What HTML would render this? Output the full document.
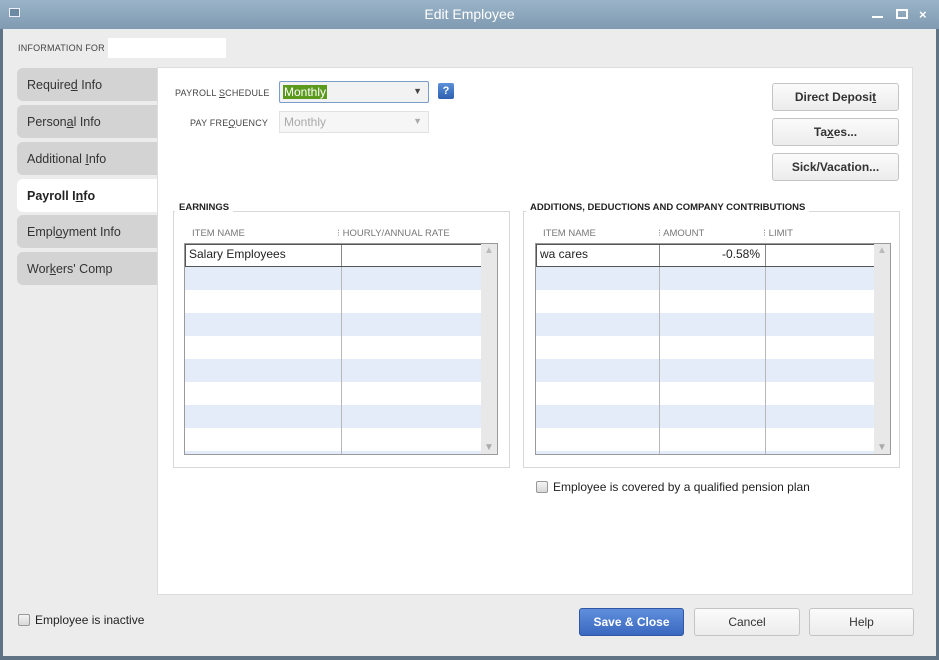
<!DOCTYPE html>
<html><head><style>
*{box-sizing:border-box;margin:0;padding:0}
body{width:939px;height:660px;overflow:hidden;background:#5f7384;font-family:"Liberation Sans",Arial,sans-serif;font-size:12px;color:#222;position:relative}
.abs{position:absolute}
#title{left:0;top:0;width:939px;height:29px;background:linear-gradient(#9ab3c8,#7f9ab1);color:#fff;font-size:14px;text-align:center;line-height:29px}
#body{left:3px;top:29px;width:933px;height:627px;background:#ececec}
.tab{position:absolute;left:17px;width:140px;height:33px;background:#d3d3d3;border-radius:6px 0 0 6px;padding:9px 0 0 10px;font-size:12.5px;color:#333}
.tab.sel{background:#fff;font-weight:bold;color:#222}
.btn{position:absolute;background:linear-gradient(#fbfbfb,#ececec);border:1px solid #c4c4c4;border-radius:3px;text-align:center;font-weight:bold;font-size:12px;color:#333;line-height:27px}
.lbl{font-size:9px;color:#444;letter-spacing:.2px}
.fs{position:absolute;border:1px solid #d8d8d8}
.leg{position:absolute;background:#fff;font-size:9.5px;font-weight:bold;padding:0 4px;color:#222}
.tbl{position:absolute;border:1px solid #9a9a9a;background:repeating-linear-gradient(#fff 0 23px,#e3ecf8 23px 46px)}
.row1{position:absolute;left:0;top:0;height:23px;border:1px solid #555;background:#fff}
.vl{position:absolute;top:0;bottom:0;width:1px;background:#b8b8b8}
.sb{position:absolute;top:0;right:0;width:16px;bottom:0;background:#e8e8e8}
.hdr{position:absolute;font-size:9.5px;color:#777}
.cb{position:absolute;width:12px;height:12px;border:1px solid #999;border-radius:2px;background:linear-gradient(#f4f4f4,#d8d8d8)}
</style></head><body>
<div id="title" class="abs">Edit Employee
<div class="abs" style="left:9px;top:8px;width:11px;height:9px;border:1px solid #eef;background:#6d8aa3"></div>
<div class="abs" style="left:872px;top:16px;width:11px;height:2px;background:#fff"></div>
<div class="abs" style="left:896px;top:9px;width:12px;height:10px;border:2px solid #fff"></div>
<div class="abs" style="left:919px;top:0;font-weight:bold;font-size:13px">×</div>
</div>
<div id="body" class="abs"></div>
<div class="abs lbl" style="left:18px;top:43px">INFORMATION FOR</div>
<div class="abs" style="left:108px;top:38px;width:118px;height:20px;background:#fff"></div>
<div class="abs" style="left:157px;top:67px;width:756px;height:528px;background:#fff;border:1px solid #ddd"></div>
<div class="tab" style="top:68px;padding-top:10px">Require<u>d</u> Info</div>
<div class="tab" style="top:105px;padding-top:10px">Person<u>a</u>l Info</div>
<div class="tab" style="top:142px;padding-top:10px">Additional <u>I</u>nfo</div>
<div class="tab sel" style="top:179px;padding-top:10px">Payroll I<u>n</u>fo</div>
<div class="tab" style="top:215px;padding-top:10px">Empl<u>o</u>yment Info</div>
<div class="tab" style="top:252px;padding-top:10px">Wor<u>k</u>ers' Comp</div>

<div class="abs lbl" style="left:175px;top:88px">PAYROLL <u>S</u>CHEDULE</div>
<div class="abs" style="left:279px;top:81px;width:150px;height:22px;border:1px solid #7a9cc8;border-radius:2px;background:#f2f2f2"><span style="position:absolute;left:3px;top:3px;background:#5c9a1e;color:#fff;font-size:12px;padding:0 1px">Monthly</span><span style="position:absolute;right:6px;top:4px;font-size:9px;color:#444">▼</span></div>
<div class="abs" style="left:438px;top:83px;width:16px;height:16px;border-radius:2px;background:linear-gradient(#5b8fd8,#2d5fb0);color:#fff;font-size:11px;font-weight:bold;text-align:center;line-height:16px">?</div>
<div class="abs lbl" style="left:190px;top:118px">PAY FRE<u>Q</u>UENCY</div>
<div class="abs" style="left:279px;top:111px;width:150px;height:22px;border:1px solid #e2e2e2;background:#f6f6f6;color:#aaa;padding:3px 4px">Monthly<span style="position:absolute;right:6px;top:4px;font-size:9px;color:#aaa">▼</span></div>

<div class="btn" style="left:772px;top:83px;width:127px;height:28px">Direct Deposi<u>t</u></div>
<div class="btn" style="left:772px;top:118px;width:127px;height:28px">Ta<u>x</u>es...</div>
<div class="btn" style="left:772px;top:153px;width:127px;height:28px">Sick/Vacation...</div>

<div class="fs" style="left:173px;top:211px;width:337px;height:257px"></div>
<div class="leg" style="left:175px;top:202px">EARNINGS</div>
<div class="hdr" style="left:192px;top:228px">ITEM NAME</div>
<div class="hdr" style="left:337px;top:228px;color:#999">⁝ <span style="color:#777">HOURLY/ANNUAL RATE</span></div>
<div class="tbl" style="left:184px;top:243px;width:314px;height:212px">
<div class="vl" style="left:156px"></div>
<div class="row1" style="width:297px"><span style="position:absolute;left:3px;top:2px;font-size:12px">Salary Employees</span><div class="vl" style="left:155px;background:#888"></div></div>
<div class="sb"><span style="position:absolute;left:3px;top:1px;color:#bbb;font-size:10px">▲</span><span style="position:absolute;left:3px;bottom:1px;color:#aaa;font-size:10px">▼</span></div>
</div>

<div class="fs" style="left:523px;top:211px;width:377px;height:257px"></div>
<div class="leg" style="left:526px;top:202px">ADDITIONS, DEDUCTIONS AND COMPANY CONTRIBUTIONS</div>
<div class="hdr" style="left:543px;top:228px">ITEM NAME</div>
<div class="hdr" style="left:658px;top:228px"><span style="color:#999">⁝</span> AMOUNT</div>
<div class="hdr" style="left:763px;top:228px"><span style="color:#999">⁝</span> LIMIT</div>
<div class="tbl" style="left:535px;top:243px;width:356px;height:212px">
<div class="vl" style="left:123px"></div><div class="vl" style="left:229px"></div>
<div class="row1" style="width:339px"><span style="position:absolute;left:3px;top:2px;font-size:12px">wa cares</span><div class="vl" style="left:122px;background:#888"></div><div class="vl" style="left:228px;background:#888"></div><span style="position:absolute;left:185px;top:2px;font-size:12px">-0.58%</span></div>
<div class="sb"><span style="position:absolute;left:3px;top:1px;color:#bbb;font-size:10px">▲</span><span style="position:absolute;left:3px;bottom:1px;color:#aaa;font-size:10px">▼</span></div>
</div>

<div class="cb" style="left:536px;top:481px"></div>
<div class="abs" style="left:553px;top:480px;font-size:12px">Employee is covered by a qualified pension plan</div>
<div class="cb" style="left:18px;top:614px"></div>
<div class="abs" style="left:35px;top:613px;font-size:12px">Employee is inactive</div>

<div class="btn" style="left:579px;top:608px;width:105px;height:28px;background:linear-gradient(#5f8fdc,#3a68c0);border-color:#2f57a3;color:#fff">Save &amp; Close</div>
<div class="btn" style="left:694px;top:608px;width:106px;height:28px;font-weight:normal">Cancel</div>
<div class="btn" style="left:809px;top:608px;width:105px;height:28px;font-weight:normal">Help</div>
</body></html>
